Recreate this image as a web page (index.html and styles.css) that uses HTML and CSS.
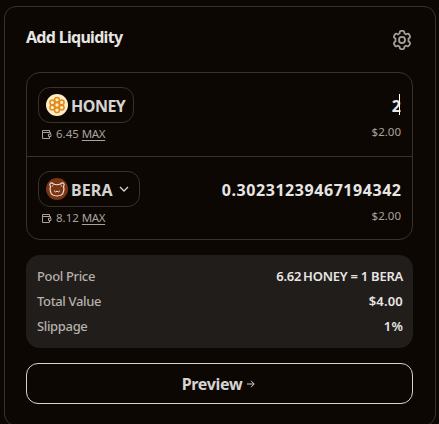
FILE: index.html
```
<!DOCTYPE html>
<html lang="en">
<head>
<meta charset="utf-8">
<title>Add Liquidity</title>
<link rel="stylesheet" href="styles.css">
</head>
<body>
<svg class="defs" width="0" height="0">
  <symbol id="wallet" viewBox="0 0 11 11"><path d="M8.500 3.500V1.500H1.500V9.500H8.500V8M1.500 3.500H9.500V5M10 5.200H7.500V7.500H10Z" fill="none" stroke="currentColor" stroke-linejoin="round"/></symbol>
</svg>
<main class="card">
  <header class="head">
    <h1 class="title">Add Liquidity</h1>
    <svg class="gear" viewBox="0 0 24 24" fill="none" stroke="currentColor" stroke-width="1.9" stroke-linejoin="round"><path d="M9.600 3.200Q9.800 2 11 2H13Q14.200 2 14.400 3.200L14.700 4.900Q15.600 5.200 16.300 5.800L17.900 5.200Q19 4.800 19.600 5.800L20.700 7.700Q21.200 8.700 20.400 9.500L19 10.600Q19.300 12 19 13.400L20.400 14.500Q21.200 15.300 20.700 16.300L19.600 18.200Q19 19.200 17.900 18.800L16.300 18.200Q15.600 18.800 14.700 19.100L14.400 20.800Q14.200 22 13 22H11Q9.800 22 9.600 20.800L9.300 19.100Q8.400 18.800 7.700 18.200L6.100 18.800Q5 19.200 4.400 18.200L3.300 16.300Q2.800 15.300 3.600 14.500L5 13.400Q4.700 12 5 10.600L3.600 9.500Q2.800 8.700 3.300 7.700L4.400 5.800Q5 4.800 6.100 5.200L7.700 5.800Q8.400 5.200 9.300 4.900Z"/><circle cx="12" cy="12" r="3.300"/></svg>
  </header>
  <section class="tokens">
    <div class="token">
      <div class="row">
        <div class="chip chip-honey">
          <svg class="coin" viewBox="0 0 22 22"><circle cx="11" cy="11" r="11" fill="#fdedc4"/><g fill="#fdedc4" stroke="#e48a1c" stroke-width="1.5"><circle cx="11" cy="5.8" r="2.4"/><circle cx="11" cy="16.2" r="2.4"/><circle cx="6.3" cy="8.4" r="2.4"/><circle cx="15.7" cy="8.4" r="2.4"/><circle cx="6.3" cy="13.6" r="2.4"/><circle cx="15.7" cy="13.6" r="2.4"/><circle cx="11" cy="11" r="2.4"/></g></svg>
          <span class="symbol honey">HONEY</span>
        </div>
        <div class="amount">2<i class="caret"></i></div>
      </div>
      <div class="row sub">
        <div class="balance"><svg class="wallet"><use href="#wallet"/></svg><span>6.45</span><u class="max">MAX</u></div>
        <span class="usd">$2.00</span>
      </div>
    </div>
    <div class="token">
      <div class="row">
        <div class="chip chip-bera">
          <svg class="coin" viewBox="0 0 22 22"><circle cx="11" cy="11" r="11" fill="#7b3512"/><g fill="none" stroke="#eee3dc" stroke-width="1.200"><path d="M7.500 6Q5.800 4.300 4.300 5.300Q3.200 6.500 4.500 8.700Q3.500 11 4.500 13.500Q5.300 17.800 11 18Q16.700 17.800 17.500 13.500Q18.500 11 17.500 8.700Q18.800 6.500 17.700 5.300Q16.200 4.300 14.500 6Q11 7.500 7.500 6Z"/><path d="M5.800 8.500L7.300 7.200M16.200 8.500L14.700 7.200M8 12.700Q9.500 14.800 11 13.200Q12.500 14.800 14 12.700" stroke-width="1"/></g></svg>
          <span class="symbol bera">BERA</span>
          <svg class="chevron" viewBox="0 0 10 6"><path d="M1 1l4 4 4-4" fill="none" stroke="currentColor" stroke-width="1.300"/></svg>
        </div>
        <div class="amount">0.30231239467194342</div>
      </div>
      <div class="row sub">
        <div class="balance"><svg class="wallet"><use href="#wallet"/></svg><span>8.12</span><u class="max">MAX</u></div>
        <span class="usd">$2.00</span>
      </div>
    </div>
  </section>
  <dl class="summary">
    <div class="line"><dt>Pool Price</dt><dd class="price"><span>6.62</span><span>HONEY = 1 BERA</span></dd></div>
    <div class="line"><dt>Total Value</dt><dd class="value">$4.00</dd></div>
    <div class="line"><dt>Slippage</dt><dd class="value">1%</dd></div>
  </dl>
  <button class="preview"><span>Preview</span><svg class="arrow" viewBox="0 0 8 8"><path d="M0 4h7M4 .8L7.200 4L4 7.200" fill="none" stroke="currentColor"/></svg></button>
</main>
</body>
</html>
```
FILE: styles.css
```
* { box-sizing: border-box; margin: 0; }
html { overflow: hidden; }
body { background: #0c0703; color: #e7e5e4; font-family: "Noto Sans", sans-serif; }
.defs { display: block; }
.card { width: 432px; height: 420px; margin: 6px 0 0 4px; padding: 20px 22px 0 21px; border: 1px solid #37322f; border-radius: 12px; }
.head { display: flex; justify-content: space-between; height: 45px; }
.title { font-size: 16px; line-height: 20px; font-weight: 700; letter-spacing: -.7px; }
.gear { width: 22px; height: 22px; margin-top: 2px; color: #a8a29e; }
.tokens { height: 168px; border: 1px solid #37322f; border-radius: 14px; }
.token { height: 83px; padding: 14px 11px 0; }
.token + .token { height: 84px; border-top: 1px solid #37322f; }
.row { display: flex; justify-content: space-between; align-items: center; }
.chip { display: flex; align-items: center; height: 36px; padding: 0 7px; border: 1px solid #37322f; border-radius: 12px; color: #d6d3d1; }
.chip-honey { width: 96px; }
.chip-bera { width: 102px; }
.coin { flex: none; width: 22px; height: 22px; margin-right: 3px; }
.symbol { padding-top: 2px; font-size: 16px; line-height: 22px; font-weight: 700; letter-spacing: -.5px; }
.bera { letter-spacing: .1px; }
.chevron { width: 10px; height: 6px; margin: 0 3px 0 auto; }
.amount { position: relative; padding-top: 2px; font-size: 16px; line-height: 22px; font-weight: 700; letter-spacing: .55px; margin-right: -.55px; }
.caret { position: absolute; right: 2px; top: 1px; width: 1px; height: 21px; background: #fff; }
.sub { height: 22px; font-size: 11.500px; line-height: 16px; color: #a8a29e; }
.balance { display: flex; align-items: center; padding-left: 3px; }
.wallet { width: 11px; height: 11px; margin-right: 4px; }
.max { margin-left: 3px; letter-spacing: -.4px; text-underline-offset: 2px; }
.usd { margin-top: -4px; }
.summary { height: 93px; margin-top: 15px; padding: 9px 10px 9px 11px; border-radius: 14px; background: #211d1a; font-size: 13px; line-height: 25px; }
.line { display: flex; justify-content: space-between; height: 25px; }
.line dt { color: #b5b0ac; font-weight: 500; letter-spacing: -.35px; }
.line dd { font-weight: 600; letter-spacing: -.25px; }
.line .value { letter-spacing: .2px; }
.price { display: flex; gap: 2px; }
.preview { display: flex; justify-content: center; align-items: center; gap: 5px; width: 100%; height: 41px; margin-top: 15px; padding: 0 2px 0 0; border: 1px solid #d6d3d1; border-radius: 12px; background: none; color: #d6d3d1; font: 700 16px/22px "Noto Sans", sans-serif; letter-spacing: -.3px; }
.preview span { padding-top: 1px; }
.arrow { width: 8px; height: 8px; }
```
